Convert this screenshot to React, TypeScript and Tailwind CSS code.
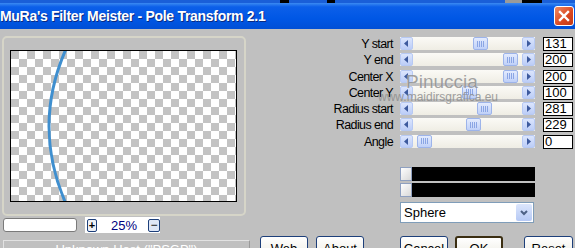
import React from "react";

// slider rows of the filter dialog (thumb = px offset from slider left)
const rows = [
  { label: "Y start", value: "131", thumb: 73 },
  { label: "Y end", value: "200", thumb: 103 },
  { label: "Center X", value: "200", thumb: 103 },
  { label: "Center Y", value: "100", thumb: 62 },
  { label: "Radius start", value: "281", thumb: 77 },
  { label: "Radius end", value: "229", thumb: 66 },
  { label: "Angle", value: "0", thumb: 17 },
];

const font = "font-['Liberation_Sans',Arial,sans-serif]";

function Arrow({ dir }: { dir: "left" | "right" }) {
  return (
    <div className="w-[13px] h-[13px] rounded-[2px] border border-[#b7c9f3] bg-[linear-gradient(to_bottom,#dbe5fd,#bccdf7)] flex items-center justify-center">
      <svg width="5" height="7" viewBox="0 0 5 7">
        {dir === "left" ? <path d="M4 0 L0 3.5 L4 7 Z" fill="#3d5a9e" /> : <path d="M1 0 L5 3.5 L1 7 Z" fill="#3d5a9e" />}
      </svg>
    </div>
  );
}

function Slider({ thumb }: { thumb: number }) {
  return (
    <div className="relative w-[135px] h-[13px] flex bg-[linear-gradient(to_bottom,#fbfaf6,#efede4)]">
      <Arrow dir="left" />
      <div className="flex-1" />
      <Arrow dir="right" />
      <div
        className="absolute top-0 w-[15px] h-[13px] rounded-[2px] border border-[#9db4ea] bg-[linear-gradient(to_bottom,#e3ebfe,#bfd0f8)] flex items-center justify-center gap-px"
        style={{ left: thumb }}
      >
        <div className="w-px h-[6px] bg-[#8aa5e4]" />
        <div className="w-px h-[6px] bg-[#8aa5e4]" />
        <div className="w-px h-[6px] bg-[#8aa5e4]" />
        <div className="w-px h-[6px] bg-[#8aa5e4]" />
      </div>
    </div>
  );
}

function XpButton({ label, wide, def }: { label: string; wide: string; def?: boolean }) {
  return (
    <div
      className={`${wide} h-[24px] rounded-[3px] ${def ? "border-2 border-[#3b2e12] pt-[3px]" : "border border-[#1d3f7a] pt-[4px]"} bg-[linear-gradient(to_bottom,#ffffff,#f2f1ea_70%,#e3e1d6)] flex justify-center text-[13px] leading-[15px] text-black`}
    >
      {label}
    </div>
  );
}

export default function App() {
  return (
    <div className={`w-[575px] h-[248px] overflow-hidden bg-[#c0c0c0] flex flex-col ${font}`}>
      {/* strip of the window behind */}
      <div className="h-[3px] shrink-0 flex bg-[#1a5fd8]">
        <div className="w-[280px]" />
        <div className="w-[9px] bg-black" />
        <div className="w-[38px]" />
        <div className="w-[8px] bg-black" />
        <div className="w-[170px]" />
        <div className="w-[17px] bg-[#9a9a9a]" />
        <div className="w-[20px] bg-black" />
      </div>

      {/* title bar */}
      <div className="h-[26px] shrink-0 flex items-center justify-between bg-[linear-gradient(to_bottom,#3b8af2_0%,#0c5fe9_15%,#0057e5_60%,#004fd6_100%)]">
        <span className="text-white font-bold text-[14px] tracking-[-0.3px] font-['Liberation_Sans',Arial,sans-serif] [text-shadow:1px_1px_0_#0a2a80]">
          MuRa's Filter Meister - Pole Transform 2.1
        </span>
        <div className="w-[20px] h-[20px] mr-[1px] rounded-[3px] border border-white bg-[linear-gradient(135deg,#f08a62,#d9461f_60%,#c23a16)] flex items-center justify-center">
          <svg width="12" height="12" viewBox="0 0 12 12">
            <path d="M2 2 L10 10 M10 2 L2 10" stroke="white" strokeWidth="2.4" strokeLinecap="square" />
          </svg>
        </div>
      </div>

      {/* main area */}
      <div className="h-[207px] shrink-0 flex">
        {/* preview */}
        <div className="w-[250px] flex flex-col">
          <div className="mt-[7px] ml-[2px] w-[244px] h-[180px] rounded-[5px] border-2 border-[#d6d5c8] pt-[12px] pl-[6px]">
            <div className="relative w-[227px] h-[152px] border border-black bg-[conic-gradient(#fff_25%,#c3c3c3_0_50%,#fff_0_75%,#c3c3c3_0)] bg-[length:16px_16px]">
              <svg className="absolute inset-0" width="225" height="150" viewBox="0 0 225 150">
                <path d="M55 -2 Q21 75 55 153" fill="none" stroke="#3f8fcf" strokeWidth="3" />
              </svg>
            </div>
          </div>
          <div className="mt-[1px] flex items-center h-[16px]">
            <div className="ml-[3px] w-[74px] h-[14px] rounded-[3px] border border-[#7a7a7a] bg-white" />
            <div className="ml-[8px] w-[75px] h-[16px] bg-white flex items-center">
              <div className="ml-[2px] w-[11px] h-[13px] rounded-[2px] border border-[#1d3f7a] bg-[#eef1f6] flex items-center justify-center text-[11px] font-bold leading-none">
                +
              </div>
              <span className="ml-[14px] text-[13px] text-[#000080] leading-none">25%</span>
              <div className="ml-[11px] w-[13px] h-[13px] rounded-[2px] border border-[#1d3f7a] bg-[#dfe7f7] flex items-center justify-center text-[12px] leading-none">
                −
              </div>
            </div>
          </div>
        </div>

        {/* controls */}
        <div className="relative flex-1 flex flex-col pt-[8px]">
          {rows.map((r) => (
            <div key={r.label} className="h-[16.3px] flex items-start">
              <div className="w-[143px] text-right text-[12.5px] leading-[14px] tracking-[-0.6px] text-black">{r.label}</div>
              <div className="ml-[7px]">
                <Slider thumb={r.thumb} />
              </div>
              <div className="ml-[8px] w-[30px] h-[14px] border border-black bg-white text-[13px] leading-[12px] pl-[1px]">
                {r.value}
              </div>
            </div>
          ))}

          <div className="ml-[150px] mt-[16px] flex flex-col gap-[2px]">
            <div className="w-[135px] h-[14px] bg-black flex">
              <div className="w-[12px] h-[14px] border border-[#8fa0c0] bg-[linear-gradient(135deg,#ffffff,#d8d8d8)]" />
            </div>
            <div className="w-[135px] h-[14px] bg-black flex">
              <div className="w-[12px] h-[14px] border border-[#8fa0c0] bg-[linear-gradient(135deg,#ffffff,#d8d8d8)]" />
            </div>
          </div>

          <div className="ml-[150px] mt-[5px] w-[134px] h-[21px] border border-[#7f9db9] bg-white flex items-center justify-between pl-[3px] pr-[1px]">
            <span className="text-[13px] text-black">Sphere</span>
            <div className="w-[16px] h-[17px] rounded-[2px] bg-[linear-gradient(to_bottom,#dce6fc,#b6c9f5)] flex items-center justify-center">
              <svg width="8" height="6" viewBox="0 0 8 6">
                <path d="M1 1 L4 4 L7 1" fill="none" stroke="#4d6185" strokeWidth="2" />
              </svg>
            </div>
          </div>

          {/* watermark */}
          <div className="absolute left-[156px] top-[43px] text-[19px] leading-none text-[#8e8e8e] opacity-80 [text-shadow:0_0_1px_#fff]">
            Pinuccia
          </div>
          <div className="absolute left-[128px] top-[62px] text-[12px] leading-none text-[#8a8a8a] opacity-80">
            www.maidirsgrafica.eu
          </div>
        </div>
      </div>

      {/* bottom row */}
      <div className="shrink-0 flex items-start">
        <div className="ml-[3px] mt-[4px] w-[247px] h-[20px] border border-[#e2e2e2] border-r-[#9a9a9a] flex justify-center pt-px text-[13px] leading-[15px] text-white">
          Unknown Host ("PSGP")
        </div>
        <div className="ml-[10px] flex">
          <XpButton label="Web" wide="w-[48px]" />
          <div className="ml-[8px]">
            <XpButton label="About" wide="w-[48px]" />
          </div>
          <div className="ml-[36px]">
            <XpButton label="Cancel" wide="w-[48px]" />
          </div>
          <div className="ml-[7px]">
            <XpButton label="OK" wide="w-[48px]" def />
          </div>
          <div className="ml-[21px]">
            <XpButton label="Reset" wide="w-[49px]" />
          </div>
        </div>
      </div>
    </div>
  );
}
